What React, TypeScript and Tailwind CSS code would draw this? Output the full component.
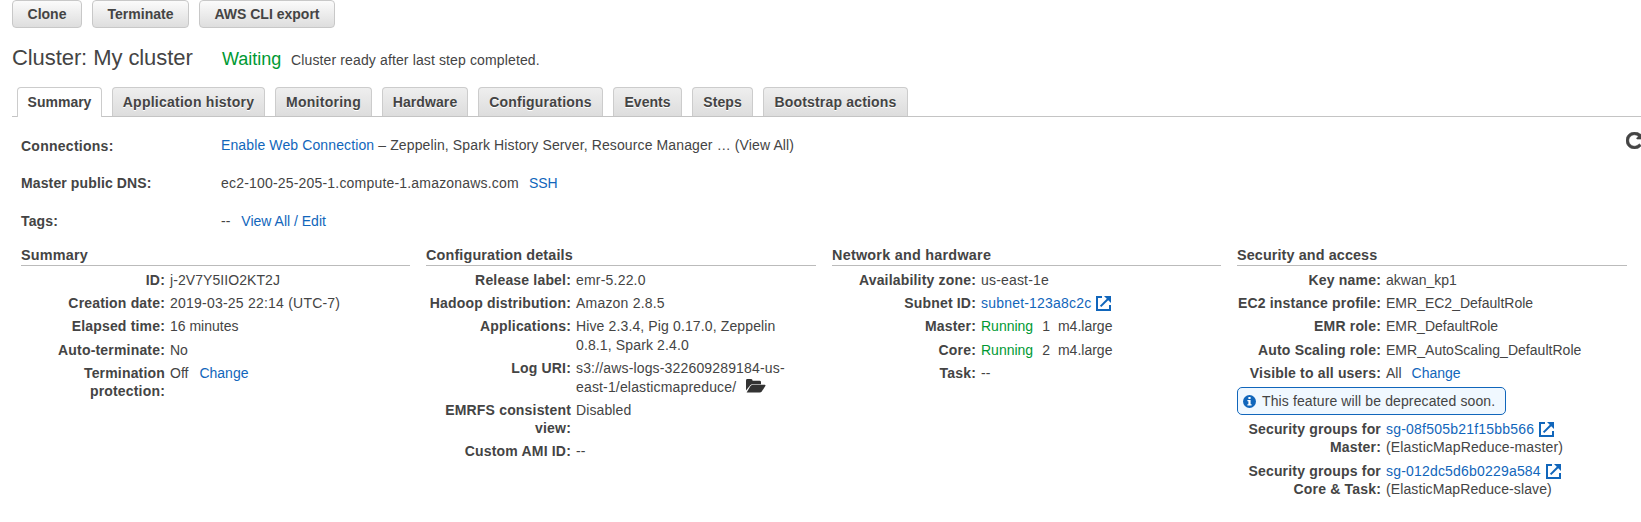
import React from 'react';

const buttons = [
  { label: 'Clone', width: 'w-[70px]' },
  { label: 'Terminate', width: 'w-[97px]' },
  { label: 'AWS CLI export', width: 'w-[136px]' },
];

const tabs = [
  { label: 'Summary', width: 'w-[85px]' },
  { label: 'Application history', width: 'w-[153px] tracking-[0.25px]' },
  { label: 'Monitoring', width: 'w-[97px] tracking-[0.27px]' },
  { label: 'Hardware', width: 'w-[86px] tracking-[0.1px]' },
  { label: 'Configurations', width: 'w-[125px] tracking-[0.22px]' },
  { label: 'Events', width: 'w-[69px]' },
  { label: 'Steps', width: 'w-[61px] tracking-[0.1px]' },
  { label: 'Bootstrap actions', width: 'w-[145px] tracking-[0.18px]' },
];

function Link({ children, className = '' }: { children: React.ReactNode; className?: string }) {
  return <a className={`cursor-pointer text-[#1166bb] ${className}`}>{children}</a>;
}

function ExternalIcon({ className = '' }: { className?: string }) {
  return (
    <svg className={`inline-block h-[15px] w-[15px] ${className}`} viewBox="0 0 15 15" fill="none" stroke="#1166bb" strokeWidth="2">
      <path d="M6 1H1v13h13V9" />
      <path d="M4.6 10.4 12 3" />
      <path d="M8 0h7v7z" fill="#1166bb" stroke="none" />
    </svg>
  );
}

function FolderIcon() {
  return (
    <svg className="ml-[10px] inline-block h-[14px] w-[20px] align-[-1px]" viewBox="0 0 20 14" fill="#333">
      <path d="M0 11.5V1.4Q0 0 1.4 0H5.2Q6.5 0 6.6 1.7H13.6Q15 1.7 15 3V5.2H6.8Q5 5.2 4 6.6Z" />
      <path d="M.6 13.6 4.3 7.3Q5.2 5.8 6.700 5.800H18.800Q20 5.800 19.300 7L15.900 12.300Q15 13.600 13.600 13.600Z" />
    </svg>
  );
}

function InfoIcon() {
  return (
    <svg className="h-[13px] w-[13px] shrink-0" viewBox="0 0 13 13">
      <circle cx="6.5" cy="6.5" r="6.5" fill="#1166bb" />
      <path d="M5.4 2h2.2v2H5.4zM4.4 5h3.2v4.3h1v1.3H4.4V9.3h1V6.3h-1z" fill="#fff" />
    </svg>
  );
}

function RefreshIcon() {
  return (
    <svg className="h-[17px] w-[17px] shrink-0" viewBox="128 128 1536 1536" fill="#444" stroke="#444" strokeWidth="50">
      <path d="M1664 256v448q0 26-19 45t-45 19h-448q-42 0-59-40-17-39 14-69l138-138q-148-137-349-137-104 0-198.500 40.500t-163.500 109.500-109.500 163.500-40.500 198.500 40.500 198.500 109.500 163.500 163.500 109.500 198.500 40.500q119 0 225-52t179-147q7-10 23-12 15 0 25 9l137 138q9 8 9.500 20.500t-7.500 22.500q-109 132-264 204.500t-327 72.500q-156 0-298-61t-245-164-164-245-61-298 61-298 164-245 245-164 298-61q147 0 284.500 55.500t244.500 156.500l130-129q29-31 70-14 39 17 39 59z" />
    </svg>
  );
}

function Column({ title, titleClass, children }: { title: string; titleClass: string; children: React.ReactNode }) {
  return (
    <section className="min-w-0">
      <h2 className={`h-[20px] border-b border-[#bbb] text-[14.4px] font-bold leading-[18px] ${titleClass}`}>{title}</h2>
      <dl className="pt-[5px]">{children}</dl>
    </section>
  );
}

function Row({
  label,
  labelWidth = 'w-[144px]',
  valueClass = '',
  children,
}: {
  label: string;
  labelWidth?: string;
  valueClass?: string;
  children: React.ReactNode;
}) {
  return (
    <div className="mb-[5px] flex leading-[18.2px]">
      <dt className={`shrink-0 text-right font-bold tracking-[0.18px] ${labelWidth}`}>{label}</dt>
      <dd className={`ml-[5px] w-[212px] whitespace-nowrap ${valueClass}`}>{children}</dd>
    </div>
  );
}

function TopRow({ label, labelClass, children }: { label: string; labelClass: string; children: React.ReactNode }) {
  return (
    <div className="flex h-[38px] leading-[18px]">
      <div className={`w-[200px] font-bold ${labelClass}`}>{label}</div>
      <div>{children}</div>
    </div>
  );
}

export default function App() {
  return (
    <div className="h-[522px] w-[1641px] overflow-hidden bg-white font-['Liberation_Sans',Arial,sans-serif] text-[14px] text-[#444]">
      <div className="flex gap-[10px] pl-3">
        {buttons.map((b) => (
          <button
            key={b.label}
            className={`h-[28px] rounded-[4px] border border-[#c8c8c8] bg-linear-to-b from-[#fbfbfb] to-[#dedede] font-bold leading-[26px] whitespace-nowrap ${b.width}`}
          >
            {b.label}
          </button>
        ))}
      </div>

      <header className="flex h-[59px] items-baseline pt-[17px] pl-3 leading-[26px]">
        <h1 className="w-[210px] text-[22px] tracking-[-0.08px]">Cluster: My cluster</h1>
        <span className="w-[69px] text-[18px] text-[#093]">Waiting</span>
        <span className="tracking-[0.13px]">Cluster ready after last step completed.</span>
      </header>

      <nav className="ml-3 flex h-[30px] gap-[10px] border-b border-[#c4c4c4] pl-[5px]">
        {tabs.map((t, i) => (
          <div
            key={t.label}
            className={`rounded-t-[4px] border border-b-0 border-[#ccc] text-center font-bold leading-[28px] whitespace-nowrap text-shadow-[0_1px_0_#fff] ${t.width} ${
              i === 0 ? 'h-[30px] bg-white' : 'h-[29px] bg-linear-to-b from-[#eee] to-[#ddd]'
            }`}
          >
            {t.label}
          </div>
        ))}
      </nav>

      <div className="flex h-[129px] justify-between pl-[21px]">
        <div className="pt-[19px]">
          <TopRow label="Connections:" labelClass="pt-px tracking-[0.26px]">
            <span className="tracking-[0.12px]">
              <Link>Enable Web Connection</Link> – Zeppelin, Spark History Server, Resource Manager … (View All)
            </span>
          </TopRow>
          <TopRow label="Master public DNS:" labelClass="tracking-[0.12px]">
            <span className="tracking-[0.19px]">ec2-100-25-205-1.compute-1.amazonaws.com</span>
            <Link className="ml-[10px]">SSH</Link>
          </TopRow>
          <TopRow label="Tags:" labelClass="tracking-[0.15px]">
            --<Link className="ml-[11px]">View All / Edit</Link>
          </TopRow>
        </div>
        <div className="w-[15px] pt-[15px]">
          <RefreshIcon />
        </div>
      </div>

      <main className="grid grid-cols-[389px_390px_389px_390px] gap-x-4 pl-[21px]">
        <Column title="Summary" titleClass="tracking-[0.2px]">
          <Row label="ID:" valueClass="tracking-[0.07px]">j-2V7Y5IIO2KT2J</Row>
          <Row label="Creation date:" valueClass="tracking-[0.22px]">2019-03-25 22:14 (UTC-7)</Row>
          <Row label="Elapsed time:">16 minutes</Row>
          <Row label="Auto-terminate:">No</Row>
          <Row label="Termination protection:">
            Off<Link className="ml-[11px]">Change</Link>
          </Row>
        </Column>
        <Column title="Configuration details" titleClass="tracking-[0.14px]">
          <Row labelWidth="w-[145px]" label="Release label:" valueClass="tracking-[0.2px]">emr-5.22.0</Row>
          <Row labelWidth="w-[145px]" label="Hadoop distribution:" valueClass="tracking-[0.2px]">Amazon 2.8.5</Row>
          <Row labelWidth="w-[145px]" label="Applications:" valueClass="leading-[18.4px] tracking-[0.13px]">
            Hive 2.3.4, Pig 0.17.0, Zeppelin
            <br />
            0.8.1, Spark 2.4.0
          </Row>
          <Row labelWidth="w-[145px]" label="Log URI:" valueClass="leading-[18.4px] tracking-[0.16px]">
            s3://aws-logs-322609289184-us-
            <br />
            east-1/elasticmapreduce/
            <FolderIcon />
          </Row>
          <Row labelWidth="w-[145px]" label="EMRFS consistent view:" valueClass="tracking-[0.1px]">Disabled</Row>
          <Row labelWidth="w-[145px]" label="Custom AMI ID:">--</Row>
        </Column>
        <Column title="Network and hardware" titleClass="tracking-[0.24px]">
          <Row label="Availability zone:" valueClass="tracking-[0.18px]">us-east-1e</Row>
          <Row label="Subnet ID:">
            <Link className="tracking-[0.2px]">subnet-123a8c2c</Link>
            <ExternalIcon className="ml-[5px] align-[-3px]" />
          </Row>
          <Row label="Master:">
            <span className="text-[#093]">Running</span>
            <span className="ml-[9px]">1</span>
            <span className="ml-[8px]">m4.large</span>
          </Row>
          <Row label="Core:">
            <span className="text-[#093]">Running</span>
            <span className="ml-[9px]">2</span>
            <span className="ml-[8px]">m4.large</span>
          </Row>
          <Row label="Task:">--</Row>
        </Column>
        <Column title="Security and access" titleClass="tracking-[0.1px]">
          <Row label="Key name:">akwan_kp1</Row>
          <Row label="EC2 instance profile:">EMR_EC2_DefaultRole</Row>
          <Row label="EMR role:">EMR_DefaultRole</Row>
          <Row label="Auto Scaling role:" valueClass="tracking-[0.03px]">EMR_AutoScaling_DefaultRole</Row>
          <Row label="Visible to all users:">
            All<Link className="ml-[10px]">Change</Link>
          </Row>
          <div className="mb-[5px] flex h-[28px] w-[269px] items-center gap-[6px] rounded-[5px] border border-[#1166bb] bg-[#f0f8ff] pl-[5px] tracking-[0.12px] whitespace-nowrap">
            <InfoIcon />
            <span>This feature will be deprecated soon.</span>
          </div>
          <Row label="Security groups for Master:" valueClass="leading-[18.4px] tracking-[0.14px]">
            <Link className="tracking-[0.21px]">sg-08f505b21f15bb566</Link>
            <ExternalIcon className="ml-[5px] align-[-3px]" />
            <br />
            (ElasticMapReduce-master)
          </Row>
          <Row label="Security groups for Core &amp; Task:" valueClass="tracking-[0.1px]">
            <Link className="tracking-[0.19px]">sg-012dc5d6b0229a584</Link>
            <ExternalIcon className="ml-[5px] align-[-3px]" />
            <br />
            (ElasticMapReduce-slave)
          </Row>
        </Column>
      </main>
    </div>
  );
}
